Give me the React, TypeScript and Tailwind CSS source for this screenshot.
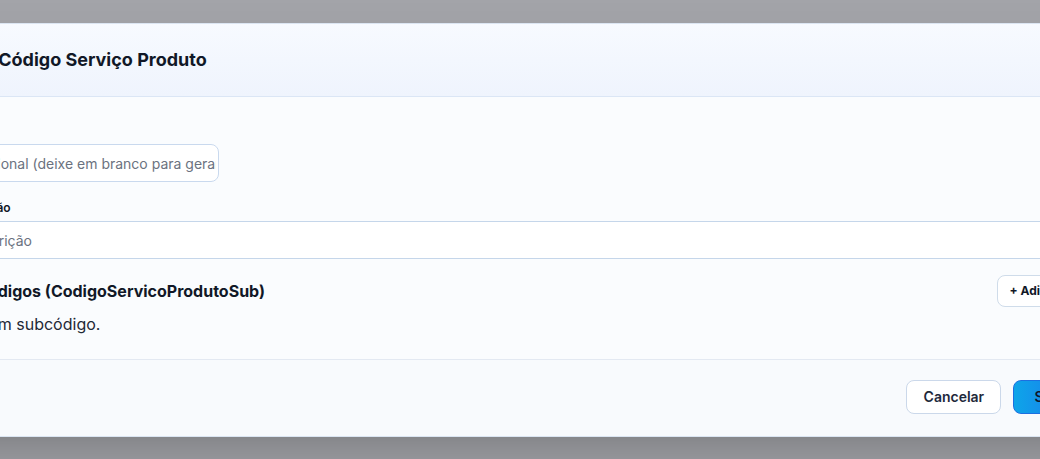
import React from "react";

export default function App() {
  return (
    <div
      className="w-[1040px] h-[459px] overflow-hidden bg-[#a3a4a9] pt-[23px]"
      style={{ fontFamily: "Inter, 'Noto Sans', sans-serif" }}
    >
      <div className="ml-[-77px] w-[1200px] rounded-xl border border-[#dbe5f2] bg-[#fafcfe] shadow-2xl overflow-hidden">
        <div className="h-[73px] flex items-center px-6 border-b border-[#dbe6f5] bg-gradient-to-b from-[#f7faff] to-[#eff4fd]">
          <h2 className="text-lg font-bold text-[#111827]">Novo Código Serviço Produto</h2>
        </div>
        <div className="px-6 pt-6 pb-[23px]">
          <div className="flex flex-col">
            <label className="text-xs leading-4 font-semibold text-[#111827]">Código</label>
            <input
              className="mt-[7px] h-[38px] w-[271px] rounded-lg border border-[#c9d9ee] bg-white pl-[21px] pr-[2px] text-sm text-[#111827] placeholder:text-[#6b7280] outline-none"
              placeholder="Opcional (deixe em branco para gerar)"
            />
          </div>
          <div className="flex flex-col mt-[18px]">
            <label className="pl-[4px] text-xs leading-4 font-semibold text-[#111827]">Descrição</label>
            <input
              className="mt-[5px] h-[38px] w-full border border-[#c5d6ea] bg-white pl-4 pr-3 text-sm text-[#111827] placeholder:text-[#6b7280] outline-none"
              placeholder="Descrição"
            />
          </div>
          <div className="mt-4 flex items-center justify-between">
            <h3 className="text-base leading-6 font-bold text-[#111827]">Subcódigos (CodigoServicoProdutoSub)</h3>
            <button className="h-8 rounded-lg border border-[#cfdcea] bg-white pl-3 pr-5 text-xs font-bold text-[#111827]">
              + Adicionar
            </button>
          </div>
          <p className="mt-[5px] text-base leading-6 text-[#1f2937]">Nenhum subcódigo.</p>
        </div>
        <div className="border-t border-[#e3e9f2] bg-[#f8fafd] px-6 pt-5 pb-[22px] flex justify-end gap-3">
          <button className="h-[34px] w-[95px] rounded-lg border border-[#cbd8ea] bg-white text-sm font-semibold text-[#1e293b]">
            Cancelar
          </button>
          <button className="h-[34px] px-5 rounded-lg border border-[#1d6fe0] bg-gradient-to-r from-[#0ea5e9] to-[#2563eb] text-sm font-semibold text-[#0f172a]">
            Salvar
          </button>
        </div>
      </div>
    </div>
  );
}
